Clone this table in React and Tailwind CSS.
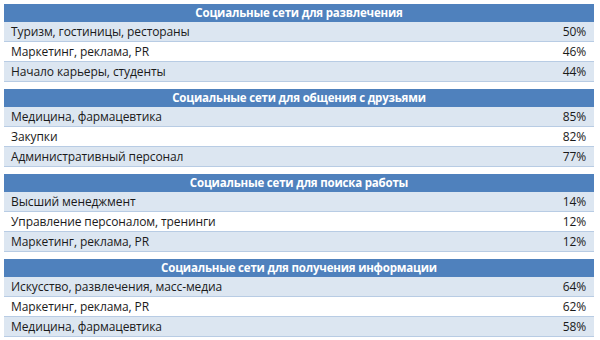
const sections = [
  {
    title: "Социальные сети для развлечения",
    rows: [
      ["Туризм, гостиницы, рестораны", "50%"],
      ["Маркетинг, реклама, PR", "46%"],
      ["Начало карьеры, студенты", "44%"],
    ],
  },
  {
    title: "Социальные сети для общения с друзьями",
    rows: [
      ["Медицина, фармацевтика", "85%"],
      ["Закупки", "82%"],
      ["Административный персонал", "77%"],
    ],
  },
  {
    title: "Социальные сети для поиска работы",
    rows: [
      ["Высший менеджмент", "14%"],
      ["Управление персоналом, тренинги", "12%"],
      ["Маркетинг, реклама, PR", "12%"],
    ],
  },
  {
    title: "Социальные сети для получения информации",
    rows: [
      ["Искусство, развлечения, масс-медиа", "64%"],
      ["Маркетинг, реклама, PR", "62%"],
      ["Медицина, фармацевтика", "58%"],
    ],
  },
];

function Section({ title, rows }) {
  return (
    <div className="flex flex-col">
      <div className="h-[18px] bg-[#4f81bd] flex items-center justify-center text-white font-bold text-[11.5px] tracking-[-0.2px] leading-none">
        {title}
      </div>
      {rows.map(([label, value], i) => (
        <div
          key={label}
          className={
            "h-[20px] flex items-center justify-between pl-[7px] pr-[8px] border-b border-[#b8cce4] text-[12px] tracking-[-0.1px] leading-none text-[#1a1a1a] " +
            (i % 2 === 0 ? "bg-[#dce6f1]" : "bg-white")
          }
        >
          <span>{label}</span>
          <span>{value}</span>
        </div>
      ))}
    </div>
  );
}

export default function App() {
  return (
    <div
      className="w-[600px] h-[340px] bg-white pt-[4px] pl-[4px] pr-[6px] flex flex-col gap-[7px]"
      style={{ fontFamily: '"Open Sans", "Noto Sans", sans-serif' }}
    >
      {sections.map((s) => (
        <Section key={s.title} title={s.title} rows={s.rows} />
      ))}
    </div>
  );
}
